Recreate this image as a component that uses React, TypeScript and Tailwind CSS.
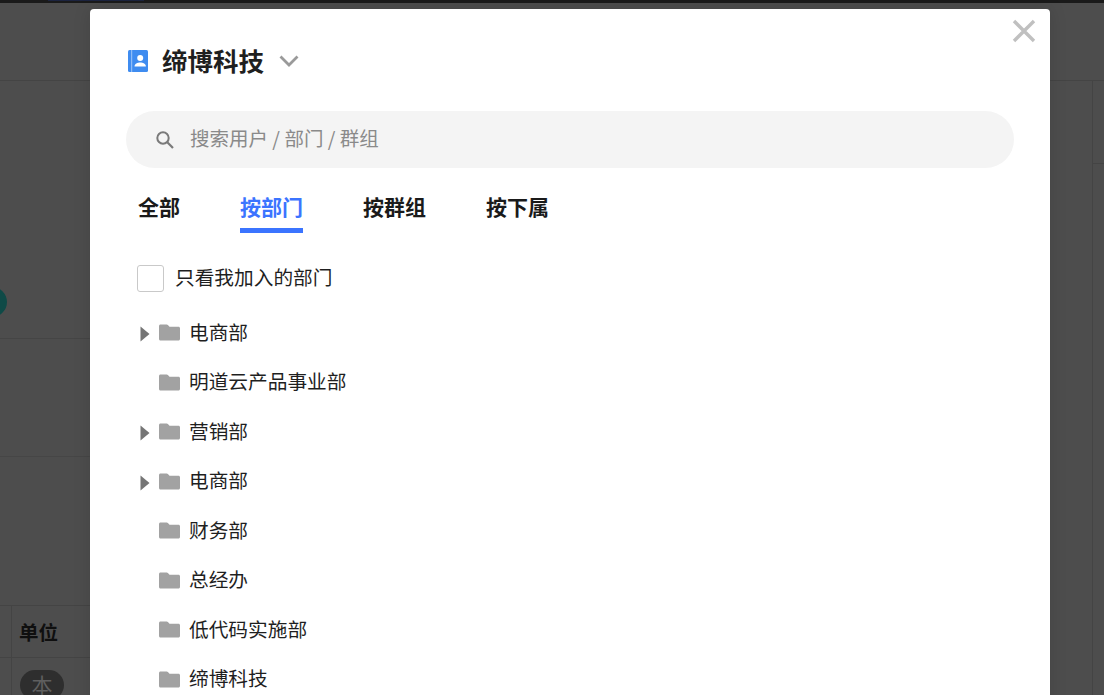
import React from "react";

function Folder() {
  return (
    <svg width="21" height="17" viewBox="0 0 21 17" className="shrink-0">
      <path d="M1.500 0.500h6.200c.5 0 .9.2 1.200.5l1.600 1.800h9c.8 0 1.500.7 1.500 1.500v10.700c0 .8-.7 1.500-1.500 1.500h-18c-.8 0-1.500-.7-1.500-1.500v-13c0-.8.7-1.500 1.500-1.500z" fill="#a2a2a2" />
    </svg>
  );
}

function Row({ name, arrow }: { name: string; arrow?: boolean }) {
  return (
    <div className="flex h-[49.5px] items-center">
      <div className="flex w-[33px] shrink-0 justify-end pr-[3px]">
        {arrow && (
          <svg width="10" height="16" viewBox="0 0 10 16" className="mr-[6px] mt-[3px]">
            <path d="M0.500 0.500L9.500 8L0.500 15.500z" fill="#757575" />
          </svg>
        )}
      </div>
      <Folder />
      <span className="ml-[9px] pb-[2px] text-[19.7px] text-[#1f1f1f]">{name}</span>
    </div>
  );
}

const rows: { name: string; arrow?: boolean }[] = [
  { name: "电商部", arrow: true },
  { name: "明道云产品事业部" },
  { name: "营销部", arrow: true },
  { name: "电商部", arrow: true },
  { name: "财务部" },
  { name: "总经办" },
  { name: "低代码实施部" },
  { name: "缔博科技" },
];

export default function App() {
  return (
    <div className="relative h-[695px] w-[1104px] overflow-hidden bg-[#4d4d4d] font-['Noto_Sans_CJK_SC','Liberation_Sans',sans-serif]">
      <div className="h-[3px] bg-[#1a1a1a] pl-[48px]">
        <div className="h-[1px] w-[96px] bg-[#1c2440]" />
      </div>
      <div className="h-[78px] border-b border-[#444444]" />
      <div className="flex h-[614px] justify-between">
        <div className="w-[200px]">
          <div className="relative h-[258px] border-b border-[#454545]">
            <div className="absolute top-[206px] -left-[23px] h-[30px] w-[30px] rounded-full bg-[#0f4a47]" />
          </div>
          <div className="h-[118px] border-b border-[#464646]" />
          <div className="h-[149px] border-b border-[#444444]" />
          <div className="flex h-[52px] border-b border-[#444444]">
            <div className="w-[12px] border-r border-[#444444]" />
            <div className="flex items-center pl-[7px] text-[19.5px] font-bold text-[#0f0f0f]">单位</div>
          </div>
          <div className="flex">
            <div className="h-[40px] w-[12px] border-r border-[#444444]" />
            <div className="ml-[8px] mt-[12px] flex h-[30px] w-[44px] items-center justify-center rounded-full bg-[#2e2e2e] text-[21px] text-[#5f5f5f]">本</div>
          </div>
        </div>
        <div className="w-[12px] border-l border-[#444444]">
          <div className="h-[83px] border-b border-[#444444]" />
        </div>
      </div>

      <div className="absolute left-[90px] top-[9px] h-[720px] w-[960px] rounded-[4px] bg-white shadow-[0_0_18px_rgba(0,0,0,0.12)]">
        <button className="absolute right-[14px] top-[10px] block">
          <svg width="24" height="24" viewBox="0 0 24 24">
            <path d="M2 2L22 22M22 2L2 22" stroke="#c0c0c0" strokeWidth="3.400" fill="none" />
          </svg>
        </button>

        <div className="flex h-[102px] items-center pl-[38px] pt-[4px]">
          <svg width="20" height="22" viewBox="0 0 20 22" className="mb-[3px] shrink-0">
            <rect x="0" y="0" width="20" height="22" rx="1.500" fill="#3f8cf0" />
            <rect x="3" y="0" width="1.200" height="22" fill="#8fbcf7" />
            <circle cx="12.200" cy="8" r="3" fill="#fff" />
            <path d="M6.500 16.500c0-2.800 3-4 5.700-4s5.700 1.200 5.700 4z" fill="#fff" />
          </svg>
          <span className="ml-[14px] pb-[4px] text-[25.5px] font-bold leading-none text-[#1f1f1f]">缔博科技</span>
          <svg width="20" height="12" viewBox="0 0 20 12" className="mb-[2px] ml-[15px]">
            <path d="M1.500 1.500L10 10L18.500 1.500" stroke="#9a9a9a" strokeWidth="2.800" fill="none" />
          </svg>
        </div>

        <div className="mx-[36px] flex h-[57px] items-center rounded-full bg-[#f4f4f4] pl-[29px]">
          <svg width="20" height="20" viewBox="0 0 20 20" className="shrink-0">
            <circle cx="8" cy="8" r="5.700" stroke="#7a7a7a" strokeWidth="2" fill="none" />
            <path d="M12.300 12.300L18 18" stroke="#7a7a7a" strokeWidth="2.200" fill="none" />
          </svg>
          <span className="ml-[15px] pb-[3px] text-[19.5px] text-[#8a8a8a]">搜索用户 / 部门 / 群组</span>
        </div>

        <div className="ml-[48px] mt-[19px] flex gap-[60px] text-[21px] font-bold leading-[38px] text-[#1a1a1a]">
          <div className="h-[46px]">全部</div>
          <div className="h-[46px] border-b-[5px] border-[#3b74ff] text-[#3b74ff]">按部门</div>
          <div className="h-[46px]">按群组</div>
          <div className="h-[46px]">按下属</div>
        </div>

        <div className="ml-[47px] mt-[32px] flex h-[27px] items-center">
          <div className="h-[27px] w-[27px] rounded-[3px] border border-[#c9c9c9] bg-white" />
          <span className="ml-[11px] pb-[3px] text-[19.7px] leading-none text-[#1f1f1f]">只看我加入的部门</span>
        </div>

        <div className="ml-[36px] mt-[16px]">
          {rows.map((r, i) => (
            <Row key={i} name={r.name} arrow={r.arrow} />
          ))}
        </div>
      </div>
    </div>
  );
}
